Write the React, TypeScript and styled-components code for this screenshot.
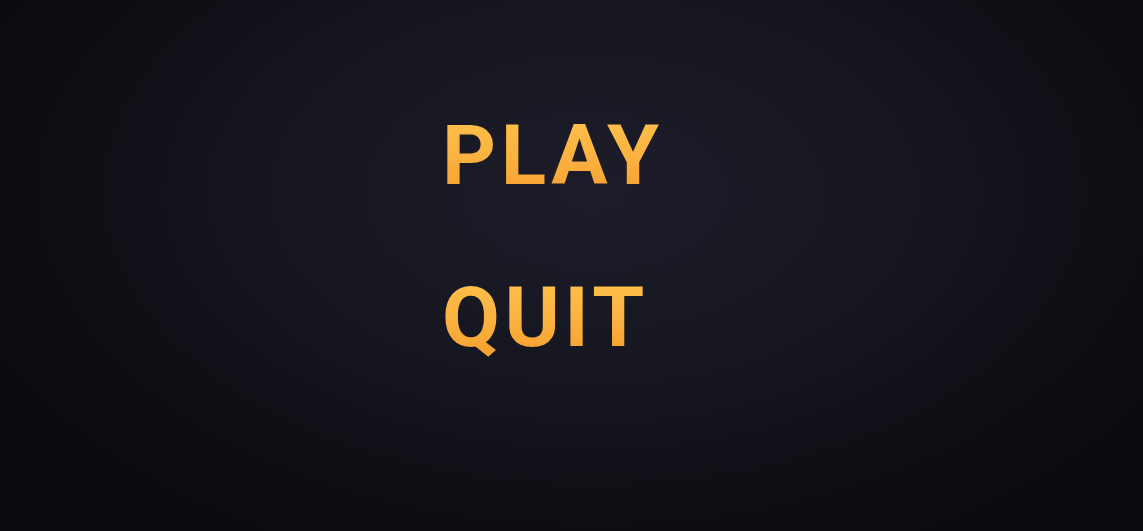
import React from "react";
import styled, { createGlobalStyle } from "styled-components";

const Global = createGlobalStyle`
  html, body { margin: 0; padding: 0; height: 100%; }
  body { background: #0b0c10; }
  #root { height: 100%; }
`;

const Screen = styled.div`
  width: 100vw;
  height: 100vh;
  overflow: hidden;
  background: radial-gradient(ellipse 62% 80% at 52% 36%, #1c1d29 0%, #15161f 45%, #0d0e13 80%, #0a0b0e 100%);
  display: flex;
  flex-direction: column;
  align-items: flex-start;
  padding: 107px 0 0 442px;
  box-sizing: border-box;
`;

const Menu = styled.nav`
  display: flex;
  flex-direction: column;
  align-items: flex-start;
  gap: 64px;
`;

const MenuItem = styled.button`
  background: linear-gradient(180deg, #ffc44d 0%, #fbb240 50%, #f49c2d 100%);
  -webkit-background-clip: text;
  background-clip: text;
  color: transparent;
  border: none;
  padding: 0;
  margin: 0;
  cursor: pointer;
  font-family: Roboto, "Noto Sans", sans-serif;
  font-weight: 700;
  font-size: 84px;
  line-height: 98px;
  letter-spacing: 4.5px;
`;

export default function App() {
  return (
    <>
      <Global />
      <Screen>
        <Menu>
          <MenuItem>PLAY</MenuItem>
          <MenuItem>QUIT</MenuItem>
        </Menu>
      </Screen>
    </>
  );
}
